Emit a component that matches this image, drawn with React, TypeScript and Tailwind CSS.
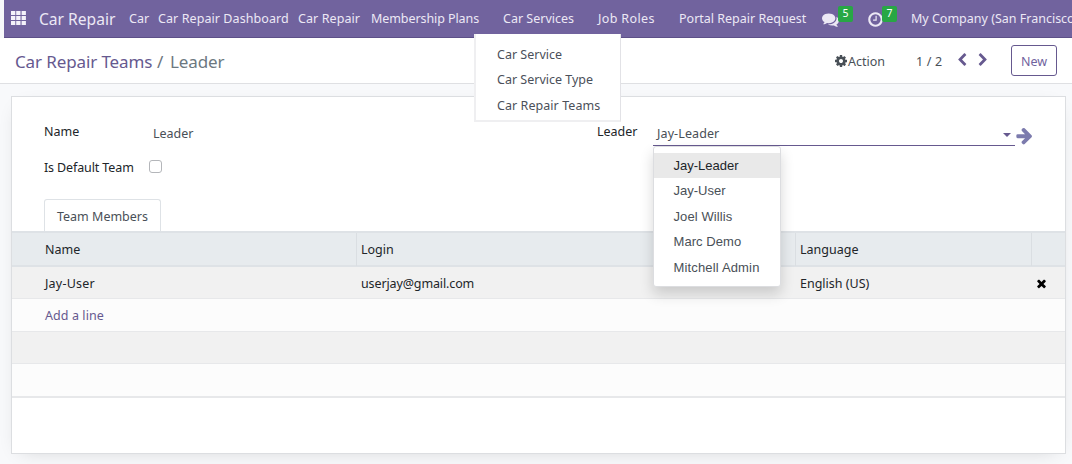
import React from "react";

const PATHS = {
  comments:
    "M1408 768q0 139-94 257t-256.5 186.5-353.5 68.5q-86 0-176-16-124 88-278 128-36 9-86 16h-3q-11 0-20.5-8t-11.5-21q-1-3-1-6.5t.5-6.5 2-6l2.5-5 3.5-5.5 4-5 4.5-5 4-4.5q5-6 23-25t26-29.5 22.5-29 25-38.5 20.5-44q-124-72-195-177t-71-224q0-139 94-257t256.5-186.5 353.5-68.5 353.5 68.5 256.5 186.5 94 257zm384 256q0 120-71 224.5t-195 176.5q10 24 20.5 44t25 38.5 22.5 29 26 29.5 23 25q1 1 4 4.5t4.5 5 4 5 3.5 5.5l2.5 5 2 6 .5 6.5-1 6.5q-3 14-13 22t-22 7q-50-7-86-16-154-40-278-128-90 16-176 16-271 0-472-132 58 4 88 4 161 0 309-45t264-129q125-92 192-212t67-254q0-77-23-152 129 71 204 178t75 230z",
  cog: "M1152 896q0-106-75-181t-181-75-181 75-75 181 75 181 181 75 181-75 75-181zm512-109v222q0 12-8 23t-20 13l-185 28q-19 54-39 91 35 50 107 138 10 12 10 25t-9 23q-27 37-99 108t-94 71q-12 0-26-9l-138-108q-44 23-91 38-16 136-29 186-7 28-36 28h-222q-14 0-24.5-8.5t-11.5-21.5l-28-184q-49-16-90-37l-141 107q-10 9-25 9-14 0-25-11-126-114-165-168-7-10-7-23 0-12 8-23 15-21 51-66.5t54-70.5q-27-50-41-99l-183-27q-13-2-21-12.5t-8-23.5v-222q0-12 8-23t19-13l186-28q14-46 39-92-40-57-107-138-10-12-10-24 0-10 9-23 26-36 98.5-107.5t94.5-71.5q13 0 26 10l138 107q44-23 91-38 16-136 29-186 7-28 36-28h222q14 0 24.5 8.5t11.5 21.5l28 184q49 16 90 37l142-107q9-9 24-9 13 0 25 10 129 119 165 170 7 8 7 22 0 12-8 23-15 21-51 66.5t-54 70.5q26 50 41 98l183 28q13 2 21 12.5t8 23.5z",
  clock: "M1024 544v448q0 14-9 23t-23 9h-320q-14 0-23-9t-9-23v-64q0-14 9-23t23-9h224v-352q0-14 9-23t23-9h64q14 0 23 9t9 23zm416 352q0-148-73-273t-198-198-273-73-273 73-198 198-73 273 73 273 198 198 273 73 273-73 198-198 73-273zm224 0q0 209-103 385.5t-279.5 279.5-385.5 103-385.5-103-279.5-279.5-103-385.5 103-385.5 279.5-279.5 385.5-103 385.5 103 279.5 279.5 103 385.5z",
  arrow: "M1600 960q0 54-37 91l-651 651q-39 37-91 37-51 0-90-37l-75-75q-38-38-38-91t38-91l293-293h-704q-52 0-84.5-37.5t-32.5-90.5v-128q0-53 32.5-90.5t84.5-37.5h704l-293-294q-38-36-38-90t38-90l75-75q38-38 90-38 53 0 91 38l651 651q37 35 37 90z",
  times: "M1490 1322q0 40-28 68l-136 136q-28 28-68 28t-68-28l-294-294-294 294q-28 28-68 28t-68-28l-136-136q-28-28-28-68t28-68l294-294-294-294q-28-28-28-68t28-68l136-136q28-28 68-28t68 28l294 294 294-294q28-28 68-28t68 28l136 136q28 28 28 68t-28 68l-294 294 294 294q28 28 28 68z",
  left: "M1427 301l-531 531 531 531q19 19 19 45t-19 45l-166 166q-19 19-45 19t-45-19l-742-742q-19-19-19-45t19-45l742-742q19-19 45-19t45 19l166 166q19 19 19 45t-19 45z",
  right: "M1363 877l-742 742q-19 19-45 19t-45-19l-166-166q-19-19-19-45t19-45l531-531-531-531q-19-19-19-45t19-45l166-166q19-19 45-19t45 19l742 742q19 19 19 45t-19 45z",
};

function Icon({ name, className }: { name: keyof typeof PATHS; className: string }) {
  return (
    <svg viewBox="0 0 1792 1792" fill="currentColor" className={`shrink-0 ${className}`}>
      <path d={PATHS[name]} />
    </svg>
  );
}

const services = [
  { label: "Car Service", cls: "h-[26px]" },
  { label: "Car Service Type", cls: "h-[25px]" },
  { label: "Car Repair Teams", cls: "h-[26px] tracking-[0.06px]" },
];

function Navbar() {
  return (
    <nav className="relative z-20 ml-1 flex h-[38px] items-center overflow-visible whitespace-nowrap border-b border-[#5d5088] bg-[#71639e] pt-px text-[12.5px] text-[#ece8f5]">
      <svg viewBox="0 0 15 14" className="mb-[3px] ml-[7px] h-[14px] w-[15px] shrink-0" fill="#f4f2fa">
        {[0, 5, 10].map((y) =>
          [0, 5.2, 10.6].map((x) => <rect key={`${x}-${y}`} x={x} y={y} width="4.3" height="4" />)
        )}
      </svg>
      <span className="ml-[13px] w-[90px] shrink-0 pt-px text-[15.6px]">Car Repair</span>
      <span className="w-[29px] shrink-0 pt-px">Car</span>
      <span className="w-[140px] shrink-0 pt-px tracking-[0.08px]">Car Repair Dashboard</span>
      <span className="w-[73px] shrink-0 pt-px tracking-[0.08px]">Car Repair</span>
      <span className="w-[132px] shrink-0 pt-px tracking-[-0.08px]">Membership Plans</span>
      <div className="relative w-[95px] shrink-0 pt-px">
        Car Services
        <div className="absolute -left-[29px] top-[25px] w-[147px] border-b-2 border-l-2 border-r border-[#efeff1] border-r-[#e2e2e6] bg-white pb-px pl-[21px] pt-[8px] text-[#4b505a]">
          {services.map((s) => (
            <div key={s.label} className={`flex items-center ${s.cls}`}>
              {s.label}
            </div>
          ))}
        </div>
      </div>
      <span className="w-[81px] shrink-0 pt-px tracking-[0.36px]">Job Roles</span>
      <span className="w-[143px] shrink-0 pt-px">Portal Repair Request</span>
      <div className="relative w-[46px] shrink-0">
        <Icon name="comments" className="h-[17px] w-[17px]" />
        <span className="absolute left-[16px] top-[-5px] flex h-[16px] w-[15px] items-center justify-center rounded-[2px] bg-[#28a745] text-[10.5px] leading-none text-white">5</span>
      </div>
      <div className="relative w-[43px] shrink-0">
        <Icon name="clock" className="-ml-px h-[17px] w-[17px]" />
        <span className="absolute left-[14px] top-[-5px] flex h-[16px] w-[15px] items-center justify-center rounded-[2px] bg-[#28a745] text-[10.5px] leading-none text-white">7</span>
      </div>
      <span className="w-[161px] shrink-0 pt-px">My Company (San Francisco</span>
    </nav>
  );
}

function ControlBar() {
  return (
    <header className="flex h-[46px] items-center whitespace-nowrap border-b border-[#dfe0e3] bg-white pl-[15px] pr-[15px] text-[12.5px] text-[#495057]">
      <h1 className="flex grow pt-[2px] text-[17px] tracking-[-0.12px] text-[#66598f]">
        <span className="w-[142px]">Car Repair Teams</span>
        <span className="w-[13px] text-[#6c757d]">/</span>
        <span className="text-[#6c7880]">Leader</span>
      </h1>
      <Icon name="cog" className="mt-px h-[14px] w-[14px]" />
      <span className="w-[68px] pt-[3px]">Action</span>
      <span className="w-[40px] pt-[3px] tracking-[0.15px]">1 / 2</span>
      <Icon name="left" className="-ml-px mb-px h-[14px] w-[14px] text-[#66598f]" />
      <Icon name="right" className="mb-px ml-[7px] mr-[21px] h-[14px] w-[14px] text-[#66598f]" />
      <button className="h-[31px] w-[46px] rounded-[3px] border border-[#66598f] pt-[3px] text-[#71639e]">New</button>
    </header>
  );
}

const users = [
  { label: "Jay-Leader", cls: "h-[25px] bg-[#e9e9e9] text-[#212529]" },
  { label: "Jay-User", cls: "h-[26px]" },
  { label: "Joel Willis", cls: "h-[25px] tracking-[0.1px]" },
  { label: "Marc Demo", cls: "h-[26px] tracking-[0.06px]" },
  { label: "Mitchell Admin", cls: "h-[25px] tracking-[0.16px]" },
];

function LeaderField() {
  return (
    <div className="flex items-start">
      <span className="mt-[2px] w-[56px]">Leader</span>
      <div className="relative flex h-[25px] w-[362px] items-center border-b border-[#66598f] pl-1 text-[#495057]">
        <span className="grow pt-[2px] tracking-[0.1px]">Jay-Leader</span>
        <svg viewBox="0 0 8 4" className="mr-[4px] mt-[3px] h-[4px] w-[8px]" fill="#66598f">
          <path d="M0 0h8L4 4z" />
        </svg>
        <ul className="absolute left-0 top-[25px] z-10 w-[128px] rounded-[3px] border border-[#dcdde0] bg-white pb-[6px] pt-[6px] font-['Liberation_Sans',sans-serif] text-[13px] shadow-[0_7px_14px_rgba(0,0,0,0.16)]">
          {users.map((u) => (
            <li key={u.label} className={`flex items-center pl-[19.5px] ${u.cls}`}>
              {u.label}
            </li>
          ))}
        </ul>
      </div>
      <Icon name="arrow" className="mt-[5px] h-[19px] w-[19px] text-[#7c7bad]" />
    </div>
  );
}

function MembersTable() {
  return (
    <div className="border-b-2 border-[#e7e8ea]">
      <div className="grid h-[36px] grid-cols-[345px_439px_236px_1fr] border-y-2 border-[#dee2e6] bg-[#e7ebee] leading-[33px]">
        <div className="border-r border-[#dadee2] pl-[33px]">Name</div>
        <div className="pl-[4px]">Login</div>
        <div className="-ml-[1px] border-x border-[#dadee2] pl-[4px]">Language</div>
        <div />
      </div>
      <div className="grid h-[32px] grid-cols-[345px_439px_236px_1fr] items-center border-b border-[#e7e8ea] bg-[#f1f1f1] pt-[3px]">
        <div className="pl-[33px] tracking-[0.2px]">Jay-User</div>
        <div className="pl-[4px] tracking-[-0.12px]">userjay@gmail.com</div>
        <div className="pl-[4px]">English (US)</div>
        <Icon name="times" className="mb-[2px] ml-[3px] h-[13px] w-[13px] text-black" />
      </div>
      <div className="flex h-[33px] items-center border-b border-[#e7e8ea] bg-[#fcfcfc] pl-[33px] pt-[3px] tracking-[0.08px] text-[#66598f]">Add a line</div>
      <div className="h-[32px] border-b border-[#e7e8ea] bg-[#f1f1f1]" />
      <div className="h-[32px] bg-[#fcfcfc]" />
    </div>
  );
}

export default function App() {
  return (
    <div className="h-[464px] w-[1072px] overflow-hidden bg-[#f8f9fb] font-['Noto_Sans',sans-serif] text-[12.5px] text-[#212529]">
      <Navbar />
      <ControlBar />
      <main className="ml-[11px] mt-[12px] h-[358px] w-[1055px] border border-[#dcdee1] bg-white shadow-[0_5px_20px_-10px_rgba(0,0,0,0.2)]">
        <div className="flex h-[107px] whitespace-nowrap">
          <div className="w-[585px] pl-[32px] pt-[25px]">
            <div className="flex h-[37px]">
              <span className="w-[109px] pt-px">Name</span>
              <span className="pt-[3px] text-[#495057]">Leader</span>
            </div>
            <div className="flex">
              <span className="w-[105px] tracking-[-0.12px]">Is Default Team</span>
              <span className="mt-px h-[13px] w-[13px] rounded-[3px] border border-[#b4b6ba] bg-white" />
            </div>
          </div>
          <div className="pt-[24px]">
            <LeaderField />
          </div>
        </div>
        <div className="-mb-px ml-[32px] mt-[-5px] flex h-[33px] w-[117px] items-center justify-center rounded-t-[3px] border border-b-0 border-[#dee2e6] bg-white pt-[2px] text-[#495057]">
          Team Members
        </div>
        <MembersTable />
      </main>
    </div>
  );
}
